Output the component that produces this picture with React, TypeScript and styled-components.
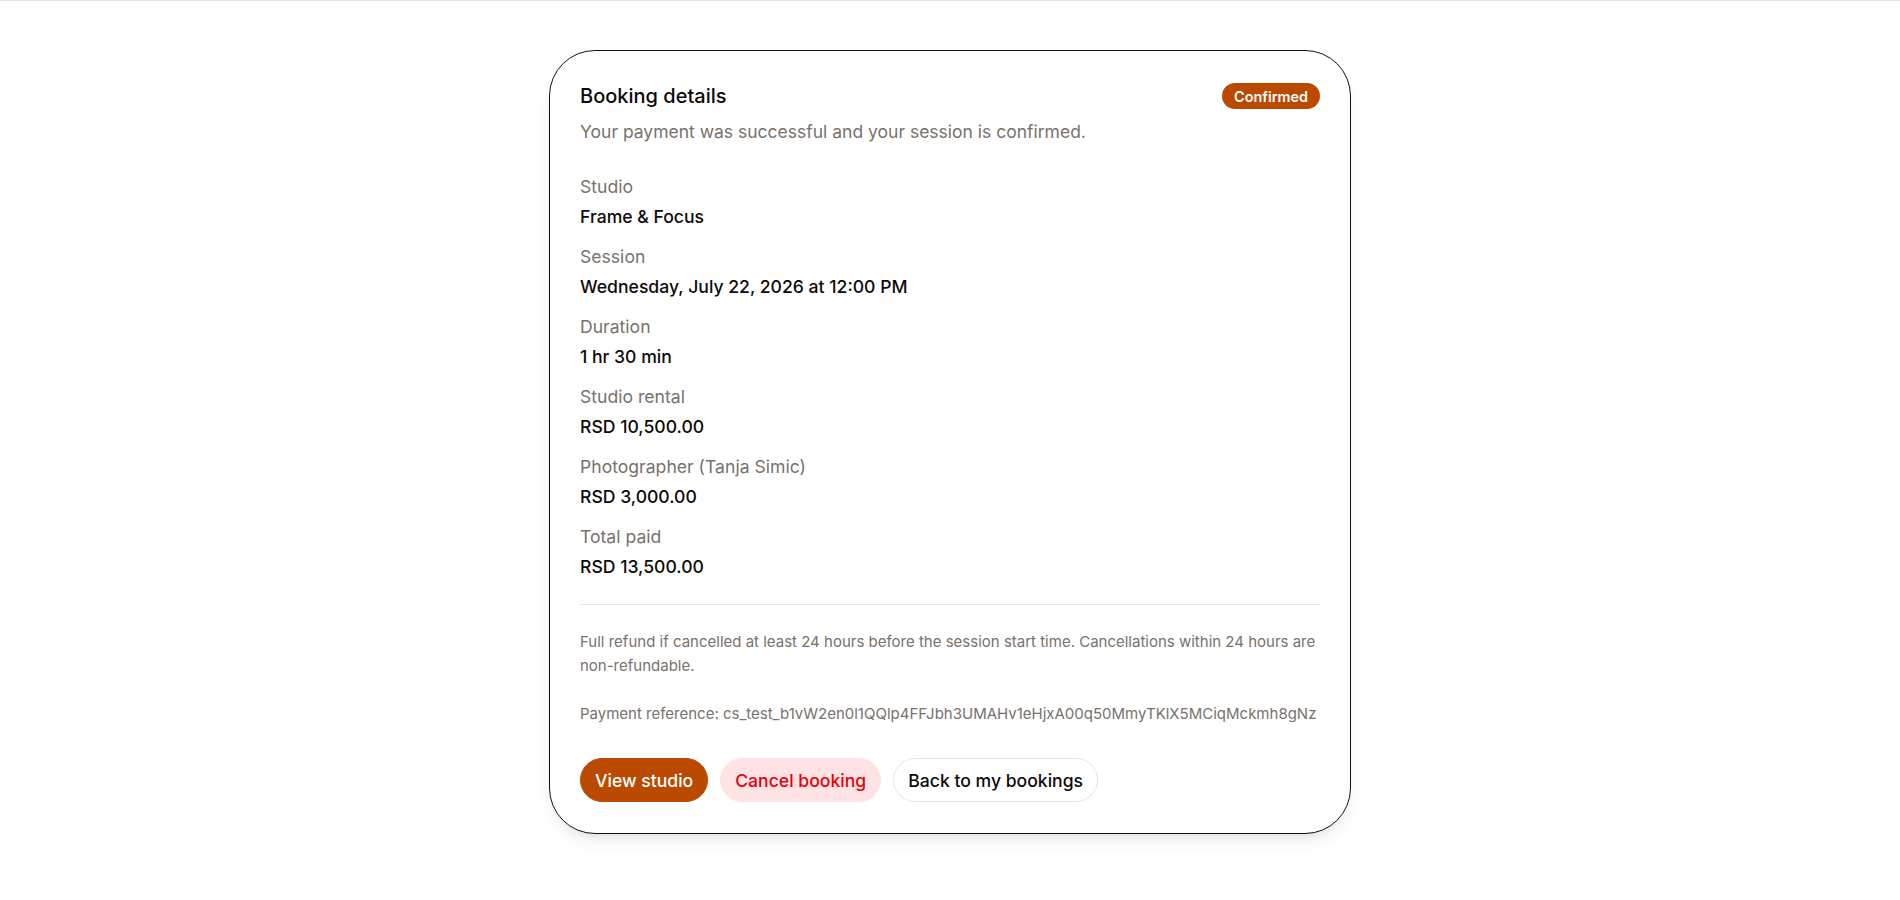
import React from "react";
import styled, { createGlobalStyle } from "styled-components";

const GlobalStyle = createGlobalStyle`
  * { box-sizing: border-box; }
  html, body { margin: 0; padding: 0; background: #ffffff; }
  body {
    font-family: Inter, "Noto Sans", "Liberation Sans", sans-serif;
    color: #0c0a09;
    -webkit-font-smoothing: antialiased;
  }
`;

const TopRule = styled.div`
  height: 1px;
  background: #e7e5e4;
`;

const Page = styled.main`
  padding: 49px 24px 40px;
  display: flex;
  justify-content: center;
`;

const Card = styled.section`
  width: 802px;
  border: 1px solid #111111;
  border-radius: 46px;
  padding: 31px 30px 31px;
  background: #ffffff;
  box-shadow: 0 10px 15px -3px rgba(0, 0, 0, 0.08), 0 4px 6px -4px rgba(0, 0, 0, 0.08);
`;

const Header = styled.header`
  display: flex;
  align-items: center;
  justify-content: space-between;
`;

const Title = styled.h2`
  margin: 0;
  font-size: 20px;
  line-height: 28px;
  font-weight: 500;
  color: #0c0a09;
`;

const Badge = styled.span`
  display: inline-flex;
  align-items: center;
  height: 26px;
  padding: 0 12px;
  border-radius: 999px;
  background: #b94a00;
  color: #ffffff;
  font-size: 14.4px;
  font-weight: 600;
`;

const Subtitle = styled.p`
  margin: 9px 0 0;
  font-size: 17.5px;
  line-height: 26px;
  color: #79716b;
`;

const Details = styled.dl`
  margin: 29px 0 0;
  display: flex;
  flex-direction: column;
  gap: 14px;
`;

const Item = styled.div`
  display: flex;
  flex-direction: column;
  gap: 4px;
`;

const Label = styled.dt`
  font-size: 17.6px;
  line-height: 26px;
  color: #79716b;
`;

const Value = styled.dd`
  margin: 0;
  font-size: 17.6px;
  line-height: 26px;
  font-weight: 500;
  color: #0c0a09;
`;

const Divider = styled.hr`
  margin: 24px 0 25px;
  border: 0;
  border-top: 1px solid #e7e5e4;
`;

const Note = styled.p<{ $spaced?: boolean }>`
  margin: 0 0 ${(p) => (p.$spaced ? "24px" : "0")};
  font-size: 15px;
  line-height: 24px;
  color: #79716b;
`;

const Actions = styled.div`
  margin-top: 32px;
  display: flex;
  gap: 12px;
`;

type Tone = "primary" | "danger" | "outline";

const toneStyles: Record<Tone, string> = {
  primary: "background:#b94a00;border-color:#b94a00;color:#ffffff;",
  danger: "background:#ffe2e4;border-color:#ffe2e4;color:#e7000b;",
  outline: "background:#ffffff;border-color:#e7e5e4;color:#0c0a09;",
};

const Button = styled.button<{ $tone: Tone }>`
  height: 44px;
  padding: 0 14px;
  border: 1px solid transparent;
  border-radius: 999px;
  font-family: inherit;
  font-size: 17.6px;
  font-weight: 500;
  cursor: pointer;
  ${(p) => toneStyles[p.$tone]}
`;

const rows: { label: string; value: string }[] = [
  { label: "Studio", value: "Frame & Focus" },
  { label: "Session", value: "Wednesday, July 22, 2026 at 12:00 PM" },
  { label: "Duration", value: "1 hr 30 min" },
  { label: "Studio rental", value: "RSD 10,500.00" },
  { label: "Photographer (Tanja Simic)", value: "RSD 3,000.00" },
  { label: "Total paid", value: "RSD 13,500.00" },
];

export default function App() {
  return (
    <>
      <GlobalStyle />
      <TopRule />
      <Page>
        <Card>
          <Header>
            <Title>Booking details</Title>
            <Badge>Confirmed</Badge>
          </Header>
          <Subtitle>Your payment was successful and your session is confirmed.</Subtitle>
          <Details>
            {rows.map((r) => (
              <Item key={r.label}>
                <Label>{r.label}</Label>
                <Value>{r.value}</Value>
              </Item>
            ))}
          </Details>
          <Divider />
          <Note $spaced>
            Full refund if cancelled at least 24 hours before the session start time. Cancellations within 24
            hours are non-refundable.
          </Note>
          <Note>Payment reference: cs_test_b1vW2en0l1QQlp4FFJbh3UMAHv1eHjxA00q50MmyTKlX5MCiqMckmh8gNz</Note>
          <Actions>
            <Button $tone="primary">View studio</Button>
            <Button $tone="danger">Cancel booking</Button>
            <Button $tone="outline">Back to my bookings</Button>
          </Actions>
        </Card>
      </Page>
    </>
  );
}
